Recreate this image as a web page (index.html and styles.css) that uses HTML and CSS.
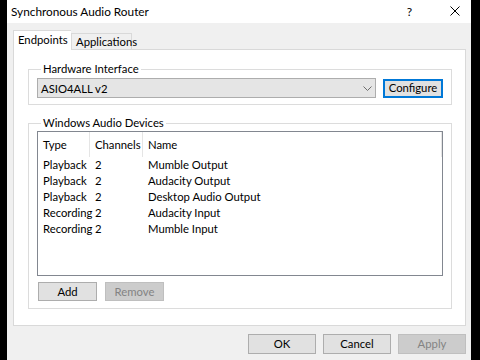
FILE: index.html
```html
<!DOCTYPE html>
<html lang="en">
<head>
  <meta charset="UTF-8">
  <title>Synchronous Audio Router</title>
  <link rel="stylesheet" href="styles.css">
</head>
<body>
  <div class="window">
    <div class="titlebar">
      <span class="title">Synchronous Audio Router</span>
      <span class="help">?</span>
      <svg class="close" width="10" height="10" viewBox="0 0 10 10">
        <path d="M0.5 0.5 L9.5 9.5 M9.5 0.5 L0.5 9.5" stroke="#000" stroke-width="1" fill="none"/>
      </svg>
    </div>

    <div class="body">
      <div class="tabs">
        <div class="tab active">Endpoints</div>
        <div class="tab">Applications</div>
      </div>

      <div class="panel">
        <fieldset class="group">
          <legend>Hardware Interface</legend>
          <div class="row">
            <div class="combo">
              <span>ASIO4ALL v2</span>
              <svg width="9" height="5" viewBox="0 0 9 5">
                <path d="M0.5 0.5 L4.5 4.5 L8.5 0.5" stroke="#6d6d6d" fill="none"/>
              </svg>
            </div>
            <button class="btn default">Configure</button>
          </div>
        </fieldset>

        <fieldset class="group devices">
          <legend>Windows Audio Devices</legend>
          <div class="listview">
            <div class="lv-head">
              <div class="c1">Type</div>
              <div class="c2">Channels</div>
              <div class="c3">Name</div>
            </div>
            <div class="lv-row"><div class="c1">Playback</div><div class="c2">2</div><div class="c3">Mumble Output</div></div>
            <div class="lv-row"><div class="c1">Playback</div><div class="c2">2</div><div class="c3">Audacity Output</div></div>
            <div class="lv-row"><div class="c1">Playback</div><div class="c2">2</div><div class="c3">Desktop Audio Output</div></div>
            <div class="lv-row"><div class="c1">Recording</div><div class="c2">2</div><div class="c3">Audacity Input</div></div>
            <div class="lv-row"><div class="c1">Recording</div><div class="c2">2</div><div class="c3">Mumble Input</div></div>
          </div>
          <div class="actions">
            <button class="btn small">Add</button>
            <button class="btn small" disabled>Remove</button>
          </div>
        </fieldset>
      </div>

      <div class="footer">
        <button class="btn wide">OK</button>
        <button class="btn wide">Cancel</button>
        <button class="btn wide" disabled>Apply</button>
      </div>
    </div>
  </div>
</body>
</html>
```

FILE: styles.css
```css
html, body {
  margin: 0;
  padding: 0;
  background: #000;
  width: 480px;
  height: 360px;
  overflow: hidden;
}
body {
  font-family: Lato, 'Noto Sans', sans-serif;
  font-size: 11.3px;
  color: #000;
}
.window {
  margin-left: 7px;
  width: 464px;
  height: 360px;
  background: #f0f0f0;
  display: flex;
  flex-direction: column;
}
.titlebar {
  height: 23px;
  background: #fff;
  display: flex;
  align-items: center;
  padding-left: 4px;
  padding-bottom: 1px;
  box-sizing: border-box;
}
.title {
  flex: 1;
  font-size: 11.8px;
}
.help {
  margin-right: 38px;
  font-size: 12px;
}
.close {
  margin-right: 11px;
}
.body {
  padding: 7px 5px 0 6px;
  display: flex;
  flex-direction: column;
}
.tabs {
  display: flex;
  align-items: flex-end;
  height: 19px;
}
.tab {
  height: 16px;
  line-height: 15px;
  padding: 0 4px;
  width: 61px;
  text-align: center;
  border: 1px solid #d9d9d9;
  border-bottom: none;
  box-sizing: border-box;
  background: #f0f0f0;
}
.tab.active {
  height: 20px;
  width: 58px;
  line-height: 18px;
  background: #fff;
  border-color: #d9d9d9;
  margin-bottom: -1px;
  border-right: none;
  position: relative;
  z-index: 1;
}
.panel {
  background: #fff;
  border: 1px solid #d9d9d9;
  height: 277px;
  box-sizing: border-box;
  padding: 12px 13px 0 14px;
}
.group {
  margin: 0;
  border: 1px solid #dcdcdc;
  padding: 1px 8px 6px 8px;
}
.group legend {
  padding: 0 2px;
  margin-left: 4px;
  line-height: 14px;
  height: 14px;
}
.row {
  display: flex;
  align-items: center;
  gap: 7px;
  padding-top: 1px;
}
.combo {
  flex: 1;
  height: 20px;
  box-sizing: border-box;
  background: #e5e5e5;
  border: 1px solid #adadad;
  display: flex;
  align-items: center;
  justify-content: space-between;
  padding: 0 3px 0 3px;
}
.btn {
  font-family: inherit;
  font-size: 11.3px;
  color: #000;
  background: #e1e1e1;
  border: 1px solid #adadad;
  height: 19px;
  padding: 0;
  line-height: 16px;
  box-sizing: border-box;
}
.btn.default {
  width: 60px;
  border: 1px solid #0078d7;
  box-shadow: inset 0 0 0 1px #0078d7;
}
.btn:disabled {
  background: #cccccc;
  border-color: #bfbfbf;
  color: #838383;
}
.devices {
  margin-top: 11px;
  padding-bottom: 7px;
}
.listview {
  height: 145px;
  border: 1px solid #828790;
  box-sizing: border-box;
  background: #fff;
}
.lv-head, .lv-row {
  display: flex;
}
.lv-head {
  height: 25px;
  line-height: 26px;
}
.lv-head > div {
  border-right: 1px solid #e5e5e5;
}
.lv-row {
  height: 16px;
  line-height: 16px;
}
.c1, .c2, .c3 {
  padding-left: 5px;
  box-sizing: border-box;
  white-space: nowrap;
}
.c1 { width: 52px; }
.c2 { width: 53px; }
.c3 { flex: 1; }
.actions {
  display: flex;
  gap: 8px;
  margin-top: 6px;
  padding-left: 1px;
}
.btn.small {
  width: 59px;
}
.footer {
  display: flex;
  justify-content: flex-end;
  gap: 7px;
  margin-top: 8px;
}
.btn.wide {
  width: 68px;
  height: 20px;
}
```
